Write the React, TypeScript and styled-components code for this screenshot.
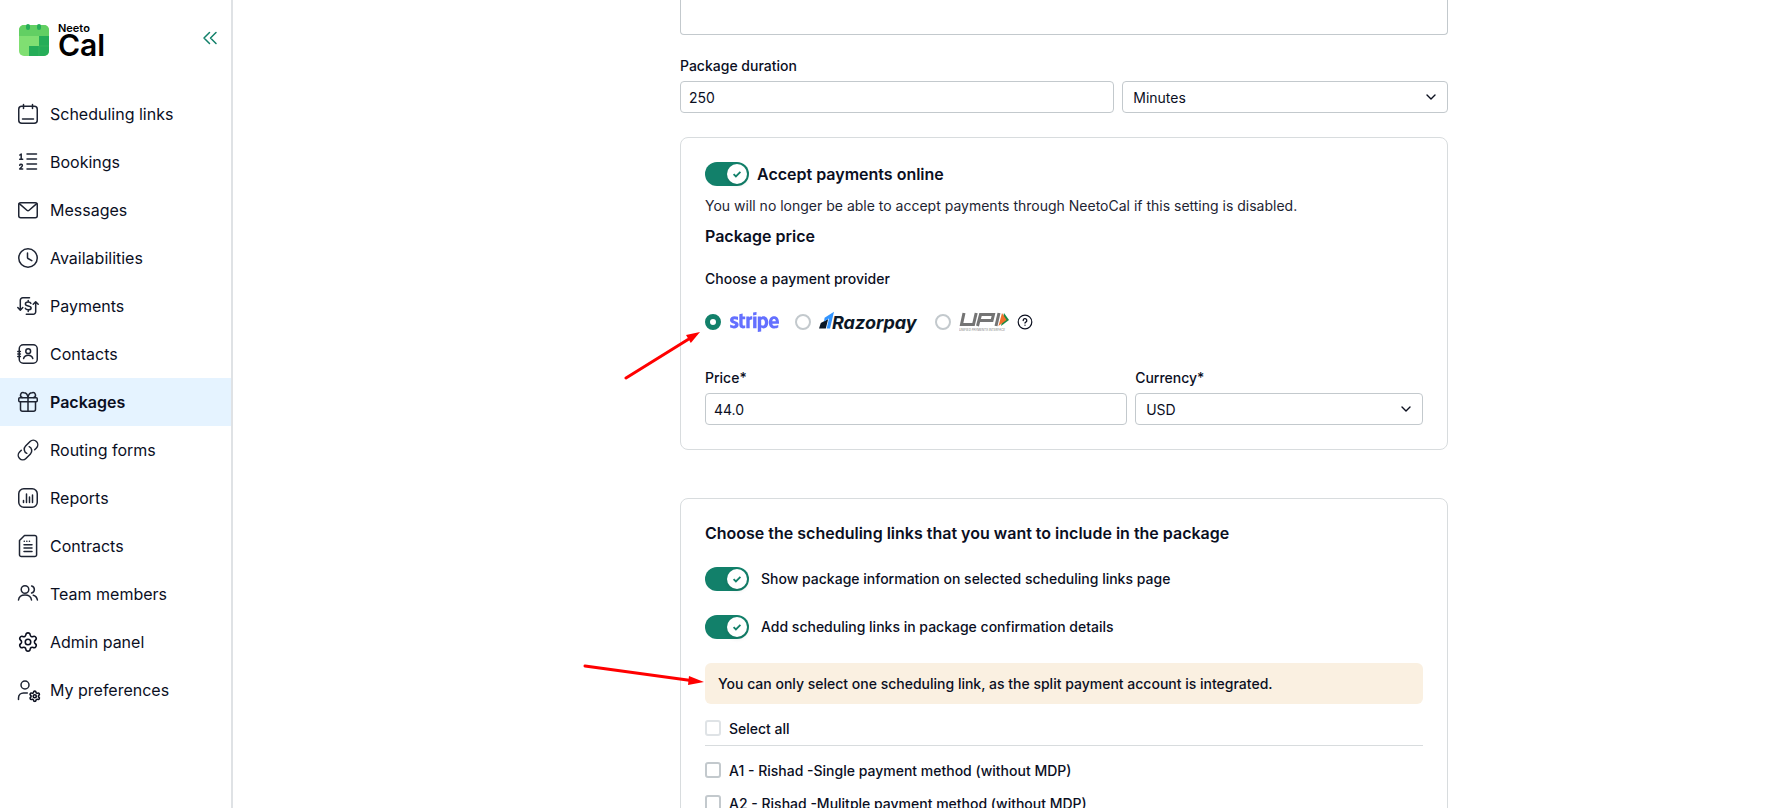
import React, { useState } from "react";
import styled, { createGlobalStyle } from "styled-components";
import { Settings } from "lucide-react";
import { FaStripe } from "react-icons/fa";

const color = {
  text: "#0b0f1f",
  body: "#1d2433",
  icon: "#1e2433",
  green: "#12806a",
  border: "#c3c9cd",
  line: "#d8dcde",
  active: "#e5f3ff",
  notice: "#faf0e1",
};

const GlobalStyle = createGlobalStyle`
  *, *::before, *::after { box-sizing: border-box; }
  body {
    margin: 0;
    background: #fff;
    color: ${color.text};
    font-family: Inter, "Liberation Sans", sans-serif;
    font-size: 14px;
  }
  input, select, textarea, button { font: inherit; color: inherit; margin: 0; }
`;

const Shell = styled.div`
  display: flex;
  height: 100vh;
  overflow: hidden;
`;

const Sidebar = styled.aside`
  flex: none;
  width: 233px;
  border-right: 2px solid #dfe2e5;
`;

const SidebarHeader = styled.header`
  display: flex;
  align-items: center;
  justify-content: space-between;
  height: 80px;
  margin-bottom: 10px;
  padding: 0 11px 0 18px;
`;

const Brand = styled.a`
  display: flex;
  align-items: center;
  gap: 8px;
  color: #000;
  text-decoration: none;
`;

const BrandText = styled.span`
  display: flex;
  flex-direction: column;
`;

const BrandSmall = styled.span`
  font-size: 11px;
  font-weight: 600;
  line-height: 10px;
`;

const BrandLarge = styled.span`
  font-size: 30px;
  font-weight: 600;
  line-height: 24px;
`;

const CollapseButton = styled.button`
  display: flex;
  padding: 0;
  border: 0;
  background: none;
  color: ${color.green};
  cursor: pointer;
`;

const Nav = styled.nav`
  display: flex;
  flex-direction: column;
`;

const NavLink = styled.a<{ $active?: boolean }>`
  display: flex;
  align-items: center;
  gap: 10px;
  height: 48px;
  padding: 0 16px;
  background: ${(p) => (p.$active ? color.active : "transparent")};
  color: ${color.text};
  font-size: 16px;
  font-weight: ${(p) => (p.$active ? 600 : 400)};
  text-decoration: none;
`;

const NavIcon = styled.svg`
  flex: none;
  width: 24px;
  height: 24px;
  overflow: visible;
  fill: none;
  stroke: ${color.icon};
  stroke-width: 1.5;
  stroke-linecap: round;
  stroke-linejoin: round;
`;

const Main = styled.main`
  flex: 1;
  min-width: 0;
  padding-left: 130px;
  overflow: hidden;
`;

const Form = styled.form`
  display: flex;
  flex-direction: column;
  gap: 24px;
  max-width: 768px;
  margin: 0 auto;
`;

const Description = styled.textarea`
  display: block;
  width: 100%;
  height: 35px;
  padding: 0 8px;
  border: 1px solid ${color.border};
  border-top: 0;
  border-radius: 0 0 4px 4px;
  resize: none;
`;

const FieldRow = styled.div<{ $columns: string }>`
  display: grid;
  grid-template-columns: ${(p) => p.$columns};
  align-items: end;
  gap: 8px;
`;

const Field = styled.div`
  display: flex;
  flex-direction: column;
  gap: 8px;
`;

const Label = styled.label`
  font-weight: 500;
  line-height: 14px;
`;

const TextInput = styled.input`
  width: 100%;
  height: 32px;
  padding: 0 8px;
  border: 1px solid ${color.border};
  border-radius: 4px;
  background: #fff;
`;

const SelectBox = styled.div`
  position: relative;

  svg {
    position: absolute;
    top: 8px;
    right: 9px;
    pointer-events: none;
  }
`;

const NativeSelect = styled.select`
  width: 100%;
  height: 32px;
  padding: 0 32px 0 10px;
  border: 1px solid ${color.border};
  border-radius: 4px;
  background: #fff;
  appearance: none;
`;

const Card = styled.section<{ $spaced?: boolean }>`
  position: relative;
  margin-top: ${(p) => (p.$spaced ? 24 : 0)}px;
  padding: 24px;
  border: 1px solid ${color.line};
  border-radius: 8px;
`;

const Arrow = styled.svg<{ $left: number; $top: number }>`
  position: absolute;
  left: ${(p) => p.$left}px;
  top: ${(p) => p.$top}px;
  fill: red;
  stroke: red;
  pointer-events: none;
`;

const Heading = styled.h2`
  margin: 0;
  font-size: 16px;
  font-weight: 600;
  line-height: 20px;
`;

const SwitchLabel = styled.label<{ $title?: boolean }>`
  display: flex;
  align-items: center;
  gap: ${(p) => (p.$title ? 8 : 12)}px;
  font-size: ${(p) => (p.$title ? 16 : 14)}px;
  font-weight: ${(p) => (p.$title ? 600 : 500)};
  line-height: 24px;
  cursor: pointer;
`;

const SwitchInput = styled.input`
  position: absolute;
  opacity: 0;
`;

const Track = styled.span<{ $on: boolean }>`
  display: flex;
  align-items: center;
  justify-content: ${(p) => (p.$on ? "flex-end" : "flex-start")};
  width: 44px;
  height: 24px;
  padding: 2px;
  border-radius: 12px;
  background: ${(p) => (p.$on ? color.green : color.border)};
`;

const Knob = styled.span`
  display: flex;
  align-items: center;
  justify-content: center;
  width: 20px;
  height: 20px;
  border-radius: 50%;
  background: #fff;
  box-shadow: 0 2px 4px rgba(0, 0, 0, 0.1);
`;

const Hint = styled.p`
  margin: 8px 0;
  color: ${color.body};
  line-height: 24px;
`;

const Providers = styled.fieldset`
  margin: 24px 0 39px;
  padding: 0;
  border: 0;
`;

const Legend = styled.legend`
  margin-bottom: 24px;
  padding: 0;
  font-weight: 500;
  line-height: 18px;
`;

const ProviderList = styled.div`
  display: flex;
  align-items: center;
  gap: 16px;
  height: 20px;
`;

const Provider = styled.label`
  display: flex;
  align-items: center;
  gap: 8px;
  cursor: pointer;
`;

const Radio = styled.input`
  width: 16px;
  height: 16px;
  border: 2px solid ${color.border};
  border-radius: 50%;
  appearance: none;

  &:checked {
    border: 5px solid ${color.green};
  }
`;

const StripeMark = styled.span`
  display: flex;
  align-items: center;
  justify-content: center;
  width: 50px;
  height: 20px;
  color: #6470ff;

  svg {
    flex: none;
    width: 49px;
    height: 40px;
  }
`;

const UpiGroup = styled.div`
  display: flex;
  align-items: center;
  gap: 8px;
`;

const HelpButton = styled.button`
  display: flex;
  padding: 0;
  border: 0;
  background: none;
  cursor: pointer;
`;

const Stack = styled.div`
  display: flex;
  flex-direction: column;
  gap: 24px;
`;

const Notice = styled.p`
  margin: 0;
  padding: 10px 13px;
  border-radius: 6px;
  background: ${color.notice};
  font-weight: 500;
  line-height: 21px;
`;

const CheckRow = styled.label`
  display: flex;
  gap: 8px;
  font-weight: 500;
  line-height: 17px;
`;

const Checkbox = styled.input<{ $faint?: boolean }>`
  flex: none;
  width: 16px;
  height: 16px;
  border: 2px solid ${(p) => (p.$faint ? "#dfe3e6" : color.border)};
  border-radius: 3px;
  background: #fff;
  appearance: none;

  &:checked {
    background: ${color.green};
    border-color: ${color.green};
  }
`;

const SelectAll = styled.div`
  margin-top: 16px;
  padding-bottom: 8px;
  border-bottom: 1px solid ${color.line};
`;

const LinkList = styled.div`
  display: flex;
  flex-direction: column;
  gap: 16px;
  margin-top: 16px;
`;

const navItems: { label: string; icon: React.ReactNode }[] = [
  {
    label: "Scheduling links",
    icon: (
      <>
        <rect x="2.75" y="4.25" width="18.5" height="17" rx="3" />
        <path d="M7.5 2.5v4M16.5 2.5v4M6.5 17h11" />
      </>
    ),
  },
  {
    label: "Bookings",
    icon: (
      <>
        <path d="M11 4h9.5M11 9h9.5M11 14h9.5M11 19h9.5" />
        <path d="M3.8 5l1.4-1v5M3.7 9.2h3M3.7 15.2c.5-1.4 2.7-1.2 2.7.3 0 1-1.4 2.1-2.7 3.5h3" />
      </>
    ),
  },
  {
    label: "Messages",
    icon: (
      <>
        <rect x="2.75" y="4.75" width="18.5" height="15" rx="2" />
        <path d="M3.3 5.6l7.6 6.6a1.7 1.7 0 0 0 2.2 0l7.6-6.6" />
      </>
    ),
  },
  {
    label: "Availabilities",
    icon: (
      <>
        <circle cx="12" cy="12" r="9.25" />
        <path d="M11.5 7v4.6a1 1 0 0 0 .5.9l3.8 2.1" />
      </>
    ),
  },
  {
    label: "Payments",
    icon: (
      <>
        <path d="M13.5 3.7H6.8a2.5 2.5 0 0 0-2.5 2.5v9.6M1.8 13.6l2.5 2.6L6.8 13.6" />
        <path d="M10.3 20.2h6.9a2.5 2.5 0 0 0 2.5-2.5V8M17.2 10.3l2.5-2.6 2.5 2.6" />
        <path d="M14.9 9.4c-.4-.9-1.4-1.3-2.7-1.3-1.6 0-2.8.6-2.8 1.9 0 2.7 5.7 1.2 5.7 3.9 0 1.3-1.2 1.9-2.9 1.9-1.4 0-2.5-.5-2.9-1.5M12.2 6.4V8M12.2 15.9v1.6" />
      </>
    ),
  },
  {
    label: "Contacts",
    icon: (
      <>
        <rect x="3.25" y="2.75" width="18" height="18.5" rx="4" />
        <circle cx="12.2" cy="9.2" r="2.4" />
        <path d="M7.6 16.5c.7-2.2 2.4-3.2 4.6-3.2s3.9 1 4.6 3.2M1.8 9.5h2.6M1.8 12h2.6M1.8 14.5h2.6" />
      </>
    ),
  },
  {
    label: "Packages",
    icon: (
      <>
        <rect x="2.75" y="7.75" width="18.5" height="4" rx="1" />
        <path d="M4.5 11.75v7.5a2 2 0 0 0 2 2h11a2 2 0 0 0 2-2v-7.5M12 7.75v13.5" />
        <path d="M12 7.5C11.5 4.5 9.8 2.75 7.9 2.75a2.45 2.45 0 0 0-1.7 4.75M12 7.5c.5-3 2.2-4.75 4.1-4.75a2.45 2.45 0 0 1 1.7 4.75" />
      </>
    ),
  },
  {
    label: "Routing forms",
    icon: (
      <path d="M13.19 8.688a4.5 4.5 0 0 1 1.242 7.244l-4.5 4.5a4.5 4.5 0 0 1-6.364-6.364l1.757-1.757m13.35-.622 1.757-1.757a4.5 4.5 0 0 0-6.364-6.364l-4.5 4.5a4.5 4.5 0 0 0 1.242 7.244" />
    ),
  },
  {
    label: "Reports",
    icon: (
      <>
        <rect x="2.75" y="2.75" width="18.5" height="18.5" rx="5" />
        <path d="M7.5 14.5v2M10.5 8v8.5M13.5 11v5.5M16.5 9v7.5" />
      </>
    ),
  },
  {
    label: "Contracts",
    icon: (
      <>
        <path d="M8.5 1.5h10.3a1.8 1.8 0 0 1 1.8 1.8v17.4a1.8 1.8 0 0 1-1.8 1.8H5.3a1.8 1.8 0 0 1-1.8-1.8V6.5z" />
        <path d="M8 10.7h8M8 14.1h8M8 17.5h8M8.2 7.3h.1M10.8 7.3h.1M13.4 7.3h.1" />
      </>
    ),
  },
  {
    label: "Team members",
    icon: (
      <>
        <circle cx="9" cy="7.5" r="3.8" />
        <path d="M2.5 18c.4-3.4 3-5 6.5-5s6.1 1.6 6.5 5M15.6 4a3.6 3.6 0 0 1 0 7M17.2 13.2c2.4.6 3.8 2.2 4.2 4.8" />
      </>
    ),
  },
  {
    label: "Admin panel",
    icon: <Settings x={1} y={1} width={22} height={22} strokeWidth={1.7} />,
  },
  {
    label: "My preferences",
    icon: (
      <>
        <circle cx="9" cy="7" r="4" />
        <path d="M2.5 21.5v-1.6c0-3 2.3-5 5-5h3.8" />
        <Settings x={12.5} y={12} width={12.5} height={12.5} strokeWidth={3} />
      </>
    ),
  },
];

function NeetoCalMark() {
  return (
    <svg width="32" height="34" viewBox="0 0 32 34" aria-hidden="true">
      <defs>
        <clipPath id="calendar-body">
          <rect x="1" y="2" width="30" height="31" rx="5" />
        </clipPath>
      </defs>
      <g clipPath="url(#calendar-body)">
        <path fill="#80df72" d="M1 2h30v31H1z" />
        <path fill="#62cf63" d="M1 2h30v11H1z" />
        <path fill="#25ad58" d="M21 13h10v20H11V23h10z" />
        <path fill="none" stroke="#35b45c" strokeWidth="1" d="M21 33V23h10" />
      </g>
      <rect x="8" y="1" width="4" height="6" rx="2" fill="#25ad58" />
      <rect x="19" y="1" width="4" height="6" rx="2" fill="#25ad58" />
    </svg>
  );
}

function RazorpayLogo() {
  return (
    <svg width="100" height="24" viewBox="0 0 100 24" role="img" aria-label="Razorpay">
      <path fill="#0b1726" d="M1.8 13L9.200 9 6.800 18.500H0z" />
      <path fill="#3395ff" d="M5.600 7.800L15 1.800 11 18.500H7.700L10 8.600 5 11.600z" />
      <text
        x="13"
        y="19"
        fill="#0b1726"
        fontFamily="Inter, sans-serif"
        fontSize="18"
        fontStyle="italic"
        fontWeight="700"
      >
        Razorpay
      </text>
    </svg>
  );
}

function UpiLogo() {
  return (
    <svg width="50" height="20" viewBox="0 0 50 20" role="img" aria-label="UPI">
      <g fill="none" stroke="#747474" strokeWidth="3">
        <path d="M5 1L2.500 12.500H14.500L17.200 1" />
        <path d="M18.500 14L21.500 2.500h13l-1.500 6H20.500" />
        <path d="M40 1L37 14" />
      </g>
      <path fill="#1a8a45" d="M45 1l5 7-8 6z" />
      <path fill="#f0712c" d="M43 1l4.500 7-8 6z" />
      <text x="0" y="19" fill="#777" fontFamily="Inter, sans-serif" fontSize="3" fontStyle="italic">
        UNIFIED PAYMENTS INTERFACE
      </text>
    </svg>
  );
}

function SelectField(props: { id: string; options: string[]; label?: string }) {
  return (
    <SelectBox>
      <NativeSelect id={props.id} aria-label={props.label}>
        {props.options.map((o) => (
          <option key={o}>{o}</option>
        ))}
      </NativeSelect>
      <svg width="16" height="16" viewBox="0 0 16 16" aria-hidden="true">
        <path d="M4 6l4 4 4-4" fill="none" stroke={color.text} strokeWidth="1.4" strokeLinecap="round" strokeLinejoin="round" />
      </svg>
    </SelectBox>
  );
}

function Switch(props: { label: string; title?: boolean }) {
  const [on, setOn] = useState(true);
  return (
    <SwitchLabel $title={props.title}>
      <SwitchInput type="checkbox" role="switch" checked={on} onChange={() => setOn(!on)} />
      <Track $on={on}>
        <Knob>
          {on && (
            <svg width="12" height="12" viewBox="0 0 12 12" aria-hidden="true">
              <path d="M2.6 6.2l2.3 2.3 4.5-4.6" fill="none" stroke={color.green} strokeWidth="1.8" />
            </svg>
          )}
        </Knob>
      </Track>
      {props.label}
    </SwitchLabel>
  );
}

const schedulingLinks = [
  "A1 - Rishad -Single payment method (without MDP)",
  "A2 - Rishad -Mulitple payment method (without MDP)",
];

export default function App() {
  return (
    <>
      <GlobalStyle />
      <Shell>
        <Sidebar>
          <SidebarHeader>
            <Brand href="#">
              <NeetoCalMark />
              <BrandText>
                <BrandSmall>Neeto</BrandSmall>
                <BrandLarge>Cal</BrandLarge>
              </BrandText>
            </Brand>
            <CollapseButton type="button" aria-label="Collapse sidebar">
              <svg width="20" height="20" viewBox="0 0 20 20" fill="none" stroke="currentColor" strokeWidth="1.5" strokeLinecap="round" strokeLinejoin="round">
                <path d="M9.5 2.500L4 8l5.500 5.500M16 2.500L10.500 8l5.500 5.500" />
              </svg>
            </CollapseButton>
          </SidebarHeader>
          <Nav>
            {navItems.map((item) => (
              <NavLink key={item.label} href="#" $active={item.label === "Packages"}>
                <NavIcon viewBox="0 0 24 24" aria-hidden="true">
                  {item.icon}
                </NavIcon>
                {item.label}
              </NavLink>
            ))}
          </Nav>
        </Sidebar>

        <Main>
          <Form>
            <Description aria-label="Description" />

            <Field>
              <Label htmlFor="duration">Package duration</Label>
              <FieldRow $columns="4fr 3fr">
                <TextInput id="duration" defaultValue="250" />
                <SelectField id="unit" label="Duration unit" options={["Minutes", "Hours"]} />
              </FieldRow>
            </Field>

            <Card>
              <Switch title label="Accept payments online" />
              <Hint>You will no longer be able to accept payments through NeetoCal if this setting is disabled.</Hint>
              <Heading>Package price</Heading>
              <Providers>
                <Legend>Choose a payment provider</Legend>
                <ProviderList>
                  <Provider>
                    <Radio type="radio" name="provider" defaultChecked aria-label="Stripe" />
                    <StripeMark>
                      <FaStripe />
                    </StripeMark>
                  </Provider>
                  <Provider>
                    <Radio type="radio" name="provider" aria-label="Razorpay" />
                    <RazorpayLogo />
                  </Provider>
                  <UpiGroup>
                    <Provider>
                      <Radio type="radio" name="provider" aria-label="UPI" />
                      <UpiLogo />
                    </Provider>
                    <HelpButton type="button" aria-label="Help">
                      <svg width="16" height="16" viewBox="0 0 16 16" fill="none" stroke={color.text} strokeLinecap="round">
                        <circle cx="8" cy="8" r="6.8" strokeWidth="1.2" />
                        <path d="M6.2 6.5a1.8 1.8 0 1 1 2.6 1.6c-.5.3-.8.5-.8 1M8 11.1v.1" strokeWidth="1.3" />
                      </svg>
                    </HelpButton>
                  </UpiGroup>
                </ProviderList>
              </Providers>
              <FieldRow $columns="22fr 15fr">
                <Field>
                  <Label htmlFor="price">Price*</Label>
                  <TextInput id="price" defaultValue="44.0" />
                </Field>
                <Field>
                  <Label htmlFor="currency">Currency*</Label>
                  <SelectField id="currency" options={["USD", "INR"]} />
                </Field>
              </FieldRow>
              <Arrow $left={-57} $top={190} width="80" height="56" aria-hidden="true">
                <path d="M2 50L64 11.5" strokeWidth="3" strokeLinecap="round" />
                <path d="M76 4L62 7l4.8 8z" strokeWidth="0" />
              </Arrow>
            </Card>

            <Card $spaced>
              <Stack>
                <Heading>Choose the scheduling links that you want to include in the package</Heading>
                <Switch label="Show package information on selected scheduling links page" />
                <Switch label="Add scheduling links in package confirmation details" />
                <Notice>You can only select one scheduling link, as the split payment account is integrated.</Notice>
              </Stack>
              <SelectAll>
                <CheckRow>
                  <Checkbox type="checkbox" $faint disabled />
                  Select all
                </CheckRow>
              </SelectAll>
              <LinkList>
                {schedulingLinks.map((name) => (
                  <CheckRow key={name}>
                    <Checkbox type="checkbox" />
                    {name}
                  </CheckRow>
                ))}
              </LinkList>
              <Arrow $left={-98} $top={163} width="124" height="26" aria-hidden="true">
                <path d="M2 4L108 18.5" strokeWidth="3" strokeLinecap="round" />
                <path d="M121 20l-15-6-1 9z" strokeWidth="0" />
              </Arrow>
            </Card>
          </Form>
        </Main>
      </Shell>
    </>
  );
}
